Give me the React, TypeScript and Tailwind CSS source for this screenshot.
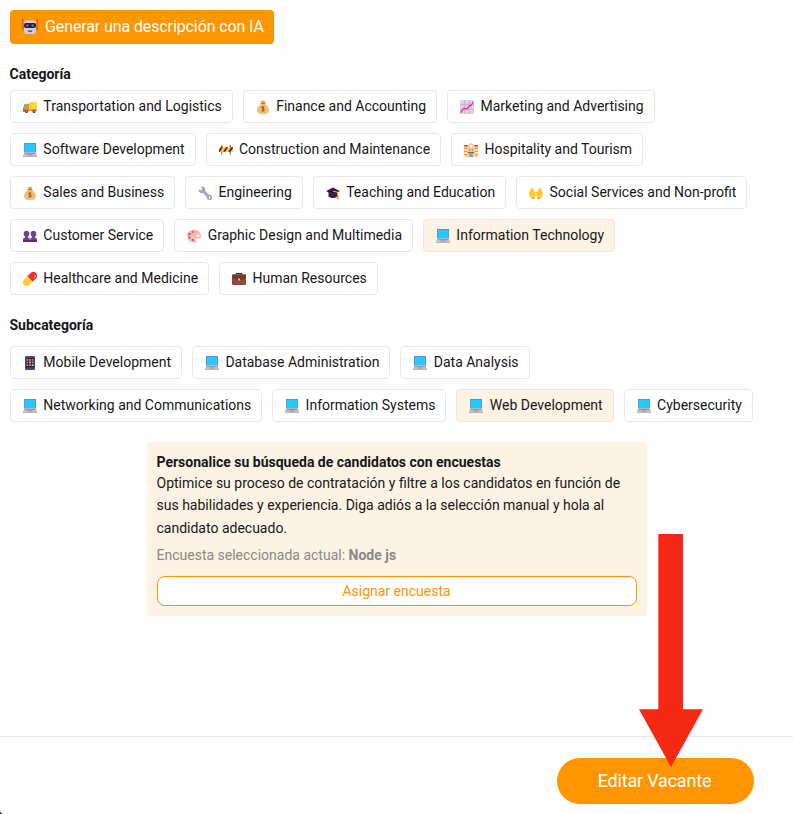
import type { ReactNode } from "react";

type IconName =
  | "truck" | "money" | "chart" | "laptop" | "barrier" | "hotel" | "wrench" | "cap"
  | "hands" | "people" | "palette" | "pill" | "briefcase" | "phone";

const icons: Record<IconName, ReactNode> = {
  truck: (
    <>
      <path d="M6 2h7.2q.8 0 .8.8V10H6z" fill="#fcd53f" />
      <path d="M6 9h8v2H6z" fill="#f59a23" />
      <path d="M1.5 4H6v7.5H0V8z" fill="#ff822d" />
      <path d="M1.8 5H4v3H.8z" fill="#26c9fc" />
      <path d="M0 9.5h2.2v2H0z" fill="#f8312f" />
      <circle cx="3.5" cy="11.5" r="1.6" fill="#433b6b" />
      <circle cx="11" cy="11.5" r="1.6" fill="#433b6b" />
      <circle cx="3.5" cy="11.5" r=".6" fill="#cdc4d6" />
      <circle cx="11" cy="11.5" r=".6" fill="#cdc4d6" />
    </>
  ),
  money: (
    <>
      <path d="M4.5.7l1.5.6L7 .2l1 1.1 1.5-.6L8.6 3H5.4z" fill="#e39d4e" />
      <path d="M5.3 3.5h3.4C11 5.2 13 7.8 13 10.4c0 2.4-1.9 3.6-6 3.6s-6-1.2-6-3.6c0-2.6 2-5.2 4.3-6.9z" fill="#f3bd75" />
      <path d="M4.7 3h4.6v1.1H4.7z" fill="#ce6f2b" />
      <path d="M8.4 7.3Q7 6.5 6 7.2c-.8.8 0 1.4 1 1.6s2 .8 1.1 1.6q-1 .7-2.5 0M7 6.2v5.6" fill="none" stroke="#7d4533" strokeWidth=".8" />
    </>
  ),
  chart: (
    <>
      <rect width="14" height="14" rx="1.5" fill="#ddd0e8" />
      <path d="M0 4.7h14M0 9.3h14M4.7 0v14M9.3 0v14" stroke="#b7a6cc" strokeWidth=".7" />
      <path d="M.8 12.4l3.1-4 3 .5 2.8-3.4 1.2.4L13 2.3" fill="none" stroke="#f52d65" strokeWidth="1.2" strokeLinecap="round" />
    </>
  ),
  laptop: (
    <>
      <path d="M1 0h12v9.6H1z" fill="#8278bd" />
      <path d="M1.6.8h10.8v8.3H1.6z" fill="#26c9fc" />
      <path d="M1.2 9.6h11.6l1.2 3.2H0z" fill="#bdbdc2" />
      <path d="M2 10.5h10" stroke="#8d8d99" strokeWidth=".8" />
      <path d="M4.5 12h5" stroke="#858591" strokeWidth=".8" />
      <path d="M0 12.8h14v1H0z" fill="#a6a6aa" />
    </>
  ),
  barrier: (
    <>
      <path d="M2 5h1.3v7H2zM10.7 5H12v7h-1.3z" fill="#998ea4" />
      <circle cx="2.8" cy="3.3" r="1" fill="#f8312f" />
      <circle cx="11.2" cy="3.3" r="1" fill="#f8312f" />
      <path d="M0 4.2h14v4.6H0z" fill="#ffc928" />
      <path d="M0 7l1.8-2.8h2L1 8.8H0zM4 8.8l3-4.6h2L6.1 8.8zM9.2 8.8l3-4.6H14v1.1l-2.5 3.5z" fill="#402a32" />
    </>
  ),
  hotel: (
    <>
      <path d="M0 3h14v11H0z" fill="#ffdc9c" />
      <path d="M3.5 2L7 0l3.5 2v12h-7z" fill="#ffc98a" />
      <path d="M0 2h3.5v1.5H0zM10.5 2H14v1.5h-3.5z" fill="#f8312f" />
      <path d="M0 5h3v1H0zM11 5h3v1h-3zM0 8h3v1H0zM11 8h3v1h-3zM0 11h3v1H0zM11 11h3v1h-3z" fill="#ff806b" />
      <circle cx="7" cy="3.3" r="1.3" fill="#fff" />
      <path d="M5 6h1.4v2H5zM7.6 6H9v2H7.6z" fill="#44bce6" />
      <path d="M4 9h6v1.2H4z" fill="#f8312f" />
      <path d="M5.2 10.2h3.6V14H5.2z" fill="#57b8d5" />
    </>
  ),
  wrench: (
    <path d="M3.1.3a3.6 3.6 0 0 1 4 4.7l4 3.7a2.7 2.7 0 1 1-2.3 2.3L5 7A3.6 3.6 0 0 1 .3 3.1l2.4 1.5 1.8-1.8zM12.2 12.2a.9.9 0 1 0-1.3-1.3.9.9 0 0 0 1.3 1.3z" fill="#aaa4b4" fillRule="evenodd" />
  ),
  cap: (
    <>
      <path d="M2.5 5h9v5.5q-4.5 3-9 0z" fill="#35213f" />
      <path d="M0 5.1L7 1.5l7 3.6-7 4z" fill="#4a2d61" />
      <path d="M1.5 5.2L7 2.3l5.4 2.8L7 8z" fill="#2b183a" />
      <path d="M7 5.1l4.7 1.2v6.2" fill="none" stroke="#f9b534" strokeWidth="1" />
      <path d="M11 9h1.4l.4 4.2h-2z" fill="#f59a23" />
    </>
  ),
  hands: (
    <>
      <path d="M6 12.8H3C1 11.4-.2 8.8 0 6.2c.2-1.3 1-.8 1.1 0L1.2 3.6c.2-1 1-.8 1.1 0l.1-1c.2-1 1.2-.9 1.3 0l.2.6c.2-1 1.2-.8 1.3.2l.4 3 .3-.6c.8-.8 1.2.1 1 1.5-.3 1.8-.5 3.5-.9 5.5z" fill="#ffc83d" />
      <path d="M8 12.8h3c2-1.4 3.2-4 3-6.6-.2-1.3-1-.8-1.1 0l-.1-2.6c-.2-1-1-.8-1.1 0l-.1-1c-.2-1-1.2-.9-1.3 0l-.2.6c-.2-1-1.2-.8-1.3.2l-.4 3-.3-.6c-.8-.8-1.2.1-1 1.5.3 1.8.5 3.5.9 5.5z" fill="#ffc83d" />
      <path d="M1.2 4h4v4h-4zM8.8 4h4v4h-4z" fill="#ffc83d" />
      <path d="M5.5 7L5 8.7M8.5 7L9 8.7" stroke="#eb982d" strokeWidth=".4" />
      <path d="M3 12h3l-.1.8H3zM8 12h3v.8H8.1z" fill="#f59a23" />
    </>
  ),
  people: (
    <g fill="#6f438f">
      <path d="M.8 3.4Q1.5 1.7 3.5 1.8T6.3 3.4L6.2 6.2 4.9 7.8v.7q1.8.2 2 2V13H0v-2.5q.2-1.8 2.1-2v-.7L.8 6.2z" />
      <path d="M7.7 3.4q.7-1.7 2.7-1.6t2.8 1.6v2.8l-1.3 1.6v.7q1.9.2 2.1 2V13H7.1v-2.5q.2-1.8 2-2v-.7L7.8 6.2z" />
      <path d="M0 11h14v2H0z" fill="#51306b" />
    </g>
  ),
  palette: (
    <>
      <path d="M6.3.7C10.7.3 14 3 14 6.5c0 2.7-1.7 3.5-3.4 3.1-1.7-.2-2.2.8-1.4 2 .9 1.4-.1 2.1-2 2.1C3.2 13.7 0 10.8 0 7 0 3.6 2.8.9 6.3.7z" fill="#ffb7a9" />
      <ellipse cx="11" cy="6.7" rx="1.8" ry="1.3" fill="#fff5f2" />
      <circle cx="5.7" cy="3" r="1" fill="#9966ce" />
      <circle cx="2.5" cy="5" r="1" fill="#f70a8d" />
      <circle cx="2.5" cy="8.7" r="1.1" fill="#00b875" />
      <circle cx="5.7" cy="11" r="1.1" fill="#5965df" />
      <circle cx="8.6" cy="3" r=".7" fill="#ef8b75" />
    </>
  ),
  pill: (
    <g transform="rotate(45 7 7)">
      <path d="M3.2 7h7.6v4.7a3.8 3.8 0 0 1-7.6 0z" fill="#ffd13f" />
      <path d="M3.2 7V2.3a3.8 3.8 0 0 1 7.6 0V7z" fill="#f8312f" />
      <path d="M8.7.9v.8" stroke="#ffd4d4" strokeWidth="1.2" strokeLinecap="round" />
    </g>
  ),
  briefcase: (
    <>
      <path d="M4.5 3V1.7h5V3" fill="none" stroke="#433437" strokeWidth="1.2" />
      <rect y="2.5" width="14" height="10.5" rx="1" fill="#8b4c3b" />
      <path d="M0 3.5q0-1 1-1h12q1 0 1 1v3L8.5 8h-3L0 6.5z" fill="#6e3c32" />
      <path d="M6 6.5h2v2.1H6z" fill="#f9b534" />
    </>
  ),
  phone: (
    <>
      <rect x="2" width="10" height="14" rx="1.2" fill="#5a417d" />
      <path d="M3 2h8v9.5H3z" fill="#30243e" />
      <path d="M3.5 3h1.7v1.7H3.5zM8.8 5.6h1.7v1.7H8.8z" fill="#26c9fc" />
      <path d="M6.1 3h1.8v1.7H6.1zM3.5 8.2h1.7v1.7H3.5z" fill="#ff822d" />
      <path d="M8.8 3h1.7v1.7H8.8zM3.5 5.6h1.7v1.7H3.5z" fill="#f8712f" />
      <path d="M6.1 5.6h1.8v1.7H6.1zM8.8 8.2h1.7v1.7H8.8z" fill="#fcd53f" />
      <path d="M6.1 8.2h1.8v1.7H6.1z" fill="#7ca5f7" />
    </>
  ),
};

interface Option {
  label: string;
  icon: IconName;
  selected?: boolean;
}

const categories: Option[] = [
  { label: "Transportation and Logistics", icon: "truck" },
  { label: "Finance and Accounting", icon: "money" },
  { label: "Marketing and Advertising", icon: "chart" },
  { label: "Software Development", icon: "laptop" },
  { label: "Construction and Maintenance", icon: "barrier" },
  { label: "Hospitality and Tourism", icon: "hotel" },
  { label: "Sales and Business", icon: "money" },
  { label: "Engineering", icon: "wrench" },
  { label: "Teaching and Education", icon: "cap" },
  { label: "Social Services and Non-profit", icon: "hands" },
  { label: "Customer Service", icon: "people" },
  { label: "Graphic Design and Multimedia", icon: "palette" },
  { label: "Information Technology", icon: "laptop", selected: true },
  { label: "Healthcare and Medicine", icon: "pill" },
  { label: "Human Resources", icon: "briefcase" },
];

const subcategories: Option[] = [
  { label: "Mobile Development", icon: "phone" },
  { label: "Database Administration", icon: "laptop" },
  { label: "Data Analysis", icon: "laptop" },
  { label: "Networking and Communications", icon: "laptop" },
  { label: "Information Systems", icon: "laptop" },
  { label: "Web Development", icon: "laptop", selected: true },
  { label: "Cybersecurity", icon: "laptop" },
];

function Chips({ options }: { options: Option[] }) {
  return (
    <div className="flex flex-wrap gap-[10px]">
      {options.map(({ label, icon, selected }) => (
        <button
          key={label}
          className={`flex h-[33px] items-center whitespace-nowrap rounded-[4px] border border-[#e5e7eb] pl-3 pr-[10px] text-sm ${selected ? "bg-[#fdf3e4]" : "bg-white"}`}
        >
          <svg className="mr-[6.35px] mt-px size-[14px] shrink-0" viewBox="0 0 14 14">{icons[icon]}</svg>
          <span className="pb-[2px]">{label}</span>
        </button>
      ))}
    </div>
  );
}

function Robot() {
  return (
    <svg className="mr-[7px] h-4 w-4 shrink-0" viewBox="0 0 16 16">
      <path d="M.8 1v8M15.2 1v8" stroke="#d44937" strokeWidth=".9" />
      <circle cx=".8" cy="1" r=".8" fill="#f8312f" />
      <circle cx="15.2" cy="1" r=".8" fill="#f8312f" />
      <path d="M0 6h2v5H0zM14 6h2v5h-2z" fill="#e4682c" />
      <path d="M4 1.5h8q2 .3 2 2.5v8.5q-.2 2.5-2.6 2.5H4.6Q2.2 15 2 12.5V4q0-2.2 2-2.5z" fill="#d3cbd9" />
      <rect x="2" y="4" width="12" height="5" rx="2" fill="#29203a" />
      <rect x="4.3" y="5.4" width="2.1" height="2.1" rx=".6" fill="#2aa5cf" />
      <rect x="9.6" y="5.4" width="2.1" height="2.1" rx=".6" fill="#2aa5cf" />
      <rect x="5.8" y="11.4" width="4.4" height="1.3" rx=".6" fill="#433b4b" />
    </svg>
  );
}

export default function App() {
  return (
    <div className="relative flex h-[814px] w-[793px] flex-col overflow-hidden bg-[#fefefe] font-['Roboto',sans-serif] text-[#171717]">
      <main className="flex h-[736px] flex-col px-[10px] pt-[10px]">
        <button className="flex h-[34px] w-[264px] items-center whitespace-nowrap rounded-[4px] bg-[#ff9500] pl-3 text-base tracking-[-0.11px] text-white">
          <Robot />
          Generar una descripción con IA
        </button>
        <h2 className="-ml-[0.5px] mt-5 mb-[6px] text-sm font-bold leading-5">Categoría</h2>
        <Chips options={categories} />
        <h2 className="-ml-[0.5px] mt-5 mb-[11px] text-sm font-bold leading-5">Subcategoría</h2>
        <Chips options={subcategories} />
        <section className="ml-[137px] mt-5 h-[174px] w-[500px] rounded-[4px] bg-[#fdf3e4] p-[10px] text-sm">
          <h3 className="-ml-[0.5px] font-bold leading-5">Personalice su búsqueda de candidatos con encuestas</h3>
          <p className="-ml-[0.5px] leading-[22.4px]">
            Optimice su proceso de contratación y filtre a los candidatos en función de sus habilidades y experiencia. Diga adiós a la selección manual y hola al candidato adecuado.
          </p>
          <p className="-ml-[0.5px] mt-[6px] mb-[11px] leading-5 text-[#8b8985]">
            Encuesta seleccionada actual: <strong>Node js</strong>
          </p>
          <button className="block h-[30px] w-full rounded-[8px] border border-[#ff9500] bg-white pr-px text-[#ff9500]">Asignar encuesta</button>
        </section>
      </main>
      <footer className="flex flex-1 items-start justify-end border-t border-[#e5e7eb] pr-[39px] pt-[21px]">
        <button className="h-[46px] w-[197px] rounded-full bg-[#ff9500] pr-[2px] text-lg tracking-[-0.2px] text-white">Editar Vacante</button>
      </footer>
      <svg className="pointer-events-none absolute left-[639px] top-[534px] h-[233px] w-[64px]" viewBox="0 0 64 233">
        <path d="M19.3 0H44v175.3h20L32 233 0 175.3h19.3z" fill="#f52814" />
      </svg>
      <svg className="absolute bottom-0 left-0 size-[3px]" viewBox="0 0 3 3">
        <path d="M0 0q.3 2.5 3 3H0z" fill="#222" />
      </svg>
    </div>
  );
}
